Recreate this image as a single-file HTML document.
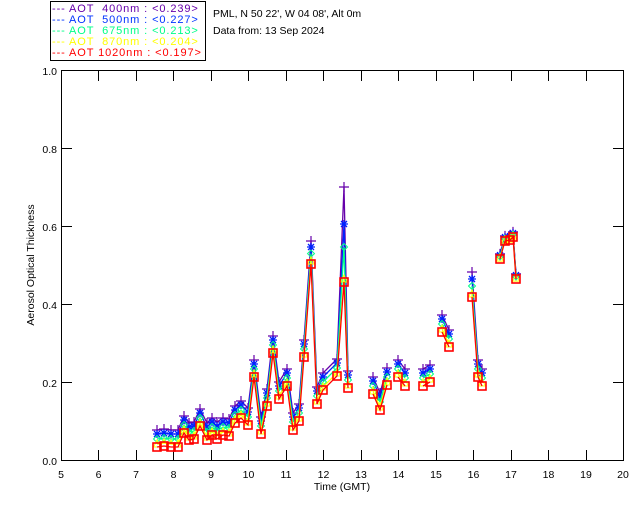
<!DOCTYPE html>
<html><head><meta charset="utf-8"><style>
html,body{margin:0;padding:0;background:#fff;width:640px;height:512px;overflow:hidden}
svg{display:block;font-family:"Liberation Sans",sans-serif}
</style></head><body>
<svg id="s" width="640" height="512" viewBox="0 0 640 512" xmlns="http://www.w3.org/2000/svg">
<rect x="0" y="0" width="640" height="512" fill="#fff"/>
<rect x="50.5" y="1.5" width="155" height="59" fill="none" stroke="#000" stroke-width="1"/>
<g font-size="11" letter-spacing="0.9">
<text x="52" y="12" fill="#6600aa" xml:space="preserve">--- AOT  400nm : &lt;0.239&gt;</text>
<text x="52" y="23" fill="#0033ff" xml:space="preserve">--- AOT  500nm : &lt;0.227&gt;</text>
<text x="52" y="34" fill="#00ff88" xml:space="preserve">--- AOT  675nm : &lt;0.213&gt;</text>
<text x="52" y="45" fill="#ffff00" xml:space="preserve">--- AOT  870nm : &lt;0.204&gt;</text>
<text x="52" y="56" fill="#ff0000" xml:space="preserve">--- AOT 1020nm : &lt;0.197&gt;</text>
</g>
<g font-size="10.5">
<text x="213" y="17" fill="#000">PML, N 50 22', W 04 08', Alt 0m</text>
<text x="213" y="34" fill="#000">Data from: 13 Sep 2024</text>
</g>
<rect x="61.5" y="70.5" width="562" height="390" fill="none" stroke="#000" stroke-width="1"/>
<g id="ax" stroke="#000" stroke-width="1"></g>
<g font-size="10.5" fill="#000" text-anchor="end">
<text x="57" y="75">1.0</text><text x="57" y="153">0.8</text><text x="57" y="231">0.6</text>
<text x="57" y="309">0.4</text><text x="57" y="387">0.2</text><text x="57" y="465">0.0</text>
</g>
<g font-size="10.5" fill="#000" text-anchor="middle">
<text x="61" y="478">5</text><text x="98.5" y="478">6</text><text x="136" y="478">7</text><text x="173.5" y="478">8</text>
<text x="211" y="478">9</text><text x="248.5" y="478">10</text><text x="286" y="478">11</text><text x="323.5" y="478">12</text>
<text x="361" y="478">13</text><text x="398.5" y="478">14</text><text x="436" y="478">15</text><text x="473.5" y="478">16</text>
<text x="511" y="478">17</text><text x="548.5" y="478">18</text><text x="586" y="478">19</text><text x="623" y="478">20</text>
<text x="342" y="490">Time (GMT)</text>
<text transform="translate(34,265) rotate(-90)">Aerosol Optical Thickness</text>
</g>
<g id="d"></g>
</svg>
<script>
var ns="http://www.w3.org/2000/svg";
var ax=document.getElementById('ax'),d=document.getElementById('d');
function el(t,a,p){var e=document.createElementNS(ns,t);for(var k in a)e.setAttribute(k,a[k]);(p||d).appendChild(e);return e;}
for(var h=6;h<20;h++){var x=Math.round(61+(h-5)*37.47)+.5;el('line',{x1:x,y1:460,x2:x,y2:450},ax);el('line',{x1:x,y1:71,x2:x,y2:81},ax);}
for(var i=1;i<5;i++){var y=Math.round(460-i*78)+.5;el('line',{x1:62,y1:y,x2:72,y2:y},ax);el('line',{x1:623,y1:y,x2:613,y2:y},ax);}
var segs=[
[[157,447],[164,446],[171,447],[178,447],[184,433],[189,440],[194,439],[200,426],[207,440],[212,435],[217,439],[223,435],[229,436],[235,423],[241,418],[248,425],[254,377],[261,434],[267,406],[273,353],[279,399],[287,386],[293,430],[299,421],[304,357],[311,264],[317,404],[323,390],[337,376],[344,282],[348,388]],
[[373,394],[380,410],[387,385]],[[398,377],[405,386]],[[423,386],[430,382]],[[442,332],[449,347]],
[[472,297],[478,377],[482,386]],[[500,259],[505,241],[510,240],[513,237],[516,279]]];
var extra={311:[-4,-6],344:[-45,-78],472:[-5,-8]};
var ser=[
{c:'#6600aa',o:-17,k:1,m:'plus'},
{c:'#0022ff',o:-13,k:0,m:'ast'},
{c:'#00ff88',o:-8,k:-1,m:'dia'},
{c:'#ffff00',o:-3,k:-1,m:'tri'},
{c:'#ff0000',o:0,k:-1,m:'sq'}];
ser.forEach(function(s,si){
 segs.forEach(function(sg,gi){
  var pts=sg.map(function(p){var o=s.o;if(gi==6)o=o*0.3;var y=p[1]+o;
   if(extra[p[0]]&&s.k>=0)y+=extra[p[0]][s.k];
   if(extra[p[0]]&&si==2)y+=extra[p[0]][0]*0.6;
   return [p[0],y];});
  el('polyline',{points:pts.map(function(p){return p.join(',')}).join(' '),fill:'none',stroke:s.c,'stroke-width':1.3});
  pts.forEach(function(p){var x=p[0],y=p[1];
   if(s.m=='plus'){el('path',{d:'M'+(x-5)+' '+y+'H'+(x+5)+'M'+x+' '+(y-5)+'V'+(y+5),stroke:s.c,'stroke-width':1.2,fill:'none'});}
   else if(s.m=='ast'){el('path',{d:'M'+(x-4)+' '+y+'H'+(x+4)+'M'+x+' '+(y-4)+'V'+(y+4)+'M'+(x-3)+' '+(y-3)+'L'+(x+3)+' '+(y+3)+'M'+(x-3)+' '+(y+3)+'L'+(x+3)+' '+(y-3),stroke:s.c,'stroke-width':1.3,fill:'none'});}
   else if(s.m=='dia'){el('path',{d:'M'+(x-3.5)+' '+y+'L'+x+' '+(y-3.5)+'L'+(x+3.5)+' '+y+'L'+x+' '+(y+3.5)+'Z',stroke:s.c,'stroke-width':1,fill:'none'});}
   else if(s.m=='tri'){el('path',{d:'M'+(x-3.5)+' '+(y+3)+'L'+x+' '+(y-4)+'L'+(x+3.5)+' '+(y+3)+'Z',stroke:s.c,'stroke-width':1,fill:'none'});}
   else {el('rect',{x:x-4,y:y-4,width:8,height:8,stroke:s.c,'stroke-width':1.6,fill:'none'});}
  });
 });
});
</script>
</body></html>
